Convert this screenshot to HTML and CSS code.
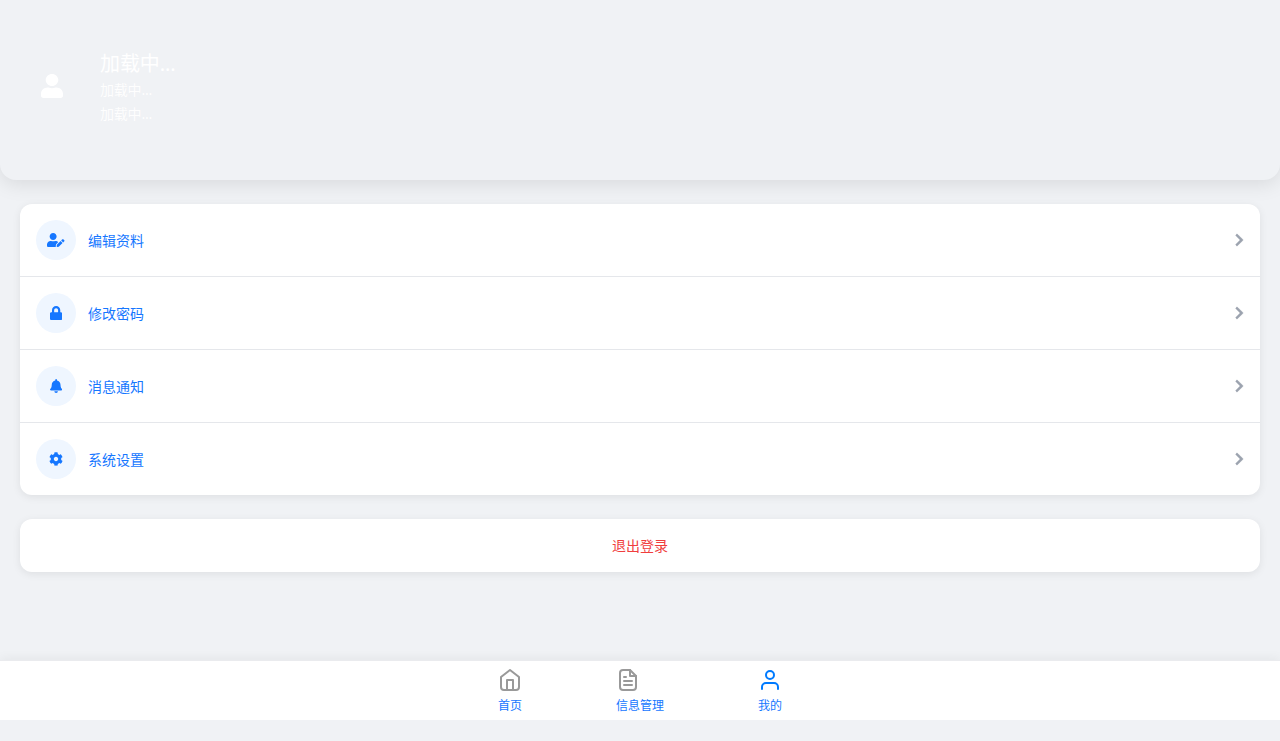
FILE: index.html
```html
<!DOCTYPE html>
<html lang="zh-CN">
<head>
<meta charset="utf-8">
<title>我的</title>
<link rel="stylesheet" href="styles.css">
</head>
<body>
<div class="page">
  <header class="profile">
    <div class="avatar"><svg width="22" height="24" viewBox="0 0 448 512" preserveAspectRatio="none" class="solid"><path d="M224 256c70.7 0 128-57.3 128-128S294.7 0 224 0 96 57.3 96 128s57.3 128 128 128zm89.6 32h-16.7c-22.2 10.2-46.9 16-72.9 16s-50.6-5.8-72.9-16h-16.7C60.2 288 0 348.2 0 422.4V464c0 26.5 21.5 48 48 48h352c26.5 0 48-21.5 48-48v-41.6c0-74.2-60.2-134.4-134.4-134.4z"/></svg></div>
    <div class="info">
      <div class="name">加载中...</div>
      <div class="detail">加载中...</div>
      <div class="detail">加载中...</div>
    </div>
  </header>
  <main class="content">
    <section class="card">
      <a class="row">
        <span class="badge"><svg width="17.5" height="14" viewBox="0 0 640 512" class="solid"><path d="M224 256c70.7 0 128-57.3 128-128S294.7 0 224 0 96 57.3 96 128s57.3 128 128 128zm89.6 32h-16.7c-22.2 10.2-46.9 16-72.9 16s-50.6-5.8-72.9-16h-16.7C60.2 288 0 348.2 0 422.4V464c0 26.5 21.5 48 48 48h274.9c-2.4-6.8-3.4-14-2.6-21.3l6.8-60.9 1.2-11.1 7.9-7.9 77.3-77.3c-24.5-27.7-60-45.5-99.9-45.5zm45.3 145.3l-6.8 61c-1.1 10.2 7.5 18.8 17.6 17.6l60.9-6.8 137.9-137.9-71.7-71.7-137.9 137.8zM633 268.9L595.1 231c-9.3-9.3-24.5-9.3-33.8 0l-37.8 37.8-4.1 4.1 71.8 71.7 41.8-41.8c9.3-9.4 9.3-24.5 0-33.9z"/></svg></span>
        <span class="label">编辑资料</span>
        <svg class="chevron solid" viewBox="0 0 320 512"><path d="M285.476 272.971L91.132 467.314c-9.373 9.373-24.569 9.373-33.941 0l-22.667-22.667c-9.357-9.357-9.375-24.522-.04-33.901L188.505 256 34.484 101.255c-9.335-9.379-9.317-24.544.04-33.901l22.667-22.667c9.373-9.373 24.569-9.373 33.941 0L285.475 239.03c9.373 9.372 9.373 24.568.001 33.941z"/></svg>
      </a>
      <a class="row">
        <span class="badge"><svg width="12.25" height="14" viewBox="0 0 448 512" class="solid"><path d="M400 224h-24v-72C376 68.2 307.8 0 224 0S72 68.2 72 152v72H48c-26.5 0-48 21.5-48 48v192c0 26.5 21.5 48 48 48h352c26.5 0 48-21.5 48-48V272c0-26.5-21.5-48-48-48zm-104 0H152v-72c0-39.7 32.3-72 72-72s72 32.3 72 72v72z"/></svg></span>
        <span class="label">修改密码</span>
        <svg class="chevron solid" viewBox="0 0 320 512"><path d="M285.476 272.971L91.132 467.314c-9.373 9.373-24.569 9.373-33.941 0l-22.667-22.667c-9.357-9.357-9.375-24.522-.04-33.901L188.505 256 34.484 101.255c-9.335-9.379-9.317-24.544.04-33.901l22.667-22.667c9.373-9.373 24.569-9.373 33.941 0L285.475 239.03c9.373 9.372 9.373 24.568.001 33.941z"/></svg>
      </a>
      <a class="row">
        <span class="badge"><svg width="12.25" height="14" viewBox="0 0 448 512" class="solid"><path d="M224 512c35.32 0 63.97-28.65 63.97-64H160.03c0 35.35 28.65 64 63.97 64zm215.39-149.71c-19.32-20.76-55.47-51.99-55.47-154.29 0-77.7-54.48-139.9-127.94-155.16V32c0-17.67-14.32-32-31.98-32s-31.98 14.33-31.98 32v20.84C118.56 68.1 64.08 130.3 64.08 208c0 102.3-36.15 133.53-55.47 154.29-6 6.45-8.66 14.16-8.61 21.71.11 16.4 12.98 32 32.1 32h383.8c19.12 0 32-15.6 32.1-32 .05-7.55-2.61-15.27-8.61-21.71z"/></svg></span>
        <span class="label">消息通知</span>
        <svg class="chevron solid" viewBox="0 0 320 512"><path d="M285.476 272.971L91.132 467.314c-9.373 9.373-24.569 9.373-33.941 0l-22.667-22.667c-9.357-9.357-9.375-24.522-.04-33.901L188.505 256 34.484 101.255c-9.335-9.379-9.317-24.544.04-33.901l22.667-22.667c9.373-9.373 24.569-9.373 33.941 0L285.475 239.03c9.373 9.372 9.373 24.568.001 33.941z"/></svg>
      </a>
      <a class="row">
        <span class="badge"><svg width="14" height="14" viewBox="0 0 512 512" class="solid"><path d="M487.4 315.7l-42.6-24.6c4.3-23.2 4.3-47 0-70.2l42.6-24.6c4.9-2.8 7.1-8.6 5.5-14-11.1-35.6-30-67.8-54.7-94.6-3.8-4.1-10-5.1-14.8-2.3L380.8 110c-17.9-15.4-38.5-27.3-60.8-35.1V25.8c0-5.6-3.9-10.5-9.4-11.7-36.7-8.2-74.3-7.8-109.2 0-5.5 1.2-9.4 6.1-9.4 11.7V75c-22.2 7.9-42.8 19.8-60.8 35.1L88.7 85.5c-4.9-2.8-11-1.9-14.8 2.3-24.7 26.7-43.6 58.9-54.7 94.6-1.7 5.4.6 11.2 5.5 14L67.3 221c-4.3 23.2-4.3 47 0 70.2l-42.6 24.6c-4.9 2.8-7.1 8.6-5.5 14 11.1 35.6 30 67.8 54.7 94.6 3.8 4.1 10 5.1 14.8 2.3l42.6-24.6c17.9 15.4 38.5 27.3 60.8 35.1v49.2c0 5.6 3.9 10.5 9.4 11.7 36.7 8.2 74.3 7.8 109.2 0 5.5-1.2 9.4-6.1 9.4-11.7v-49.2c22.2-7.9 42.8-19.8 60.8-35.1l42.6 24.6c4.9 2.8 11 1.9 14.8-2.3 24.7-26.7 43.6-58.9 54.7-94.6 1.5-5.5-.7-11.3-5.6-14.1zM256 336c-44.1 0-80-35.9-80-80s35.9-80 80-80 80 35.9 80 80-35.9 80-80 80z"/></svg></span>
        <span class="label">系统设置</span>
        <svg class="chevron solid" viewBox="0 0 320 512"><path d="M285.476 272.971L91.132 467.314c-9.373 9.373-24.569 9.373-33.941 0l-22.667-22.667c-9.357-9.357-9.375-24.522-.04-33.901L188.505 256 34.484 101.255c-9.335-9.379-9.317-24.544.04-33.901l22.667-22.667c9.373-9.373 24.569-9.373 33.941 0L285.475 239.03c9.373 9.372 9.373 24.568.001 33.941z"/></svg>
      </a>
    </section>
    <button class="card logout">退出登录</button>
  </main>
  <nav class="tabs">
    <a class="tab"><span class="tab-body">
      <svg class="line" viewBox="0 0 24 24"><path d="M3 9l9-7 9 7v10a3 3 0 0 1-3 3H6a3 3 0 0 1-3-3z"/><path d="M9 22V12h6v10"/></svg>
      <span>首页</span></span></a>
    <a class="tab"><span class="tab-body">
      <svg class="line" viewBox="0 0 24 24"><path d="M14 2H7a3 3 0 0 0-3 3v14a3 3 0 0 0 3 3h10a3 3 0 0 0 3-3V8z"/><path d="M14 2v6h6M16 13H8M16 17H8M10 9H8"/></svg>
      <span>信息管理</span></span></a>
    <a class="tab"><span class="tab-body">
      <svg class="line active" viewBox="0 0 24 24"><path d="M20 21v-2a4 4 0 0 0-4-4H8a4 4 0 0 0-4 4v2"/><circle cx="12" cy="7" r="4"/></svg>
      <span>我的</span></span></a>
  </nav>
</div>
</body>
</html>
```
FILE: styles.css
```css
* { box-sizing: border-box; }

body {
  margin: 0;
  background: #f0f2f5;
  font-family: "Noto Sans", "Noto Sans CJK SC", sans-serif;
  font-size: 14px;
}

svg { display: block; flex: none; }
.solid { fill: currentColor; }

.page {
  display: flex;
  flex-direction: column;
  height: 720px;
}

.profile {
  display: flex;
  align-items: center;
  gap: 16px;
  height: 180px;
  padding: 0 20px 8px;
  border-radius: 0 0 16px 16px;
  box-shadow: 0 4px 20px rgba(0, 0, 0, 0.1);
  background: #f0f2f5;
  color: #fff;
}

.avatar {
  display: flex;
  align-items: center;
  justify-content: center;
  width: 64px;
  height: 64px;
}

.info { padding-top: 3px; }
.name { font-size: 20px; line-height: 29px; letter-spacing: -0.1px; }
.detail { line-height: 24px; letter-spacing: -0.2px; opacity: 0.95; }

.content {
  display: flex;
  flex: 1;
  flex-direction: column;
  gap: 24px;
  padding: 24px 20px 0;
}

.card {
  overflow: hidden;
  border: 0;
  border-radius: 12px;
  background: #fff;
  box-shadow: 0 2px 8px rgba(0, 0, 0, 0.08);
}

.row {
  display: flex;
  align-items: center;
  gap: 12px;
  height: 73px;
  padding: 0 16px;
  border-bottom: 1px solid #e5e7eb;
  color: #1677ff;
}
.row:last-child { height: 72px; border-bottom: 0; }

.badge {
  display: flex;
  align-items: center;
  justify-content: center;
  width: 40px;
  height: 40px;
  border-radius: 50%;
  background: #eff6ff;
}

.label { flex: 1; }

.chevron {
  width: 8.75px;
  height: 14px;
  overflow: visible;
  color: #9ca3af;
  stroke: currentColor;
  stroke-width: 16;
}

.logout {
  height: 53px;
  color: #f03e3e;
  font: inherit;
  line-height: 20px;
}

.tabs {
  display: grid;
  grid-template-columns: repeat(3, 130px);
  justify-content: center;
  height: 60px;
  border-top: 1px solid #eaebee;
  background: #fff;
  box-shadow: 0 -2px 10px rgba(0, 0, 0, 0.05);
  color: #1677ff;
  font-size: 12px;
  line-height: 18px;
}

.tab {
  display: flex;
  justify-content: center;
  padding-top: 7px;
}
.tab-body { display: grid; gap: 5px; align-content: start; }

.line {
  width: 24px;
  height: 24px;
  fill: none;
  stroke: #999;
  stroke-width: 2;
  stroke-linecap: round;
  stroke-linejoin: round;
}
.line.active { stroke: #007bff; }
```
